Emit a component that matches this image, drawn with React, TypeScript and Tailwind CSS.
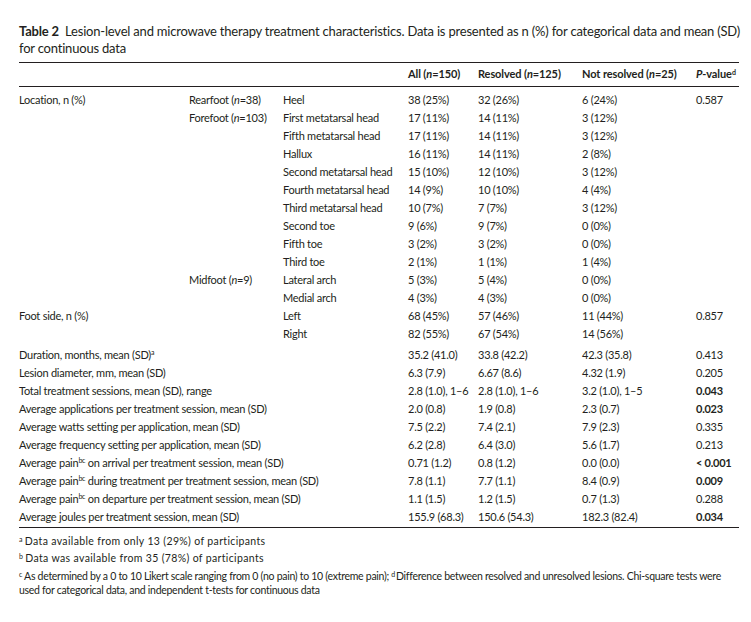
import React from 'react';

type Row = {
  a?: React.ReactNode;
  b?: React.ReactNode;
  c?: React.ReactNode;
  all: string;
  res: string;
  not: string;
  p?: string;
  bold?: boolean;
  gap?: boolean;
};

const N = () => <i>n</i>;

const rows: Row[] = [
  { a: 'Location, n (%)', b: <>Rearfoot (<N />=38)</>, c: 'Heel', all: '38 (25%)', res: '32 (26%)', not: '6 (24%)', p: '0.587' },
  { b: <>Forefoot (<N />=103)</>, c: 'First metatarsal head', all: '17 (11%)', res: '14 (11%)', not: '3 (12%)' },
  { c: 'Fifth metatarsal head', all: '17 (11%)', res: '14 (11%)', not: '3 (12%)' },
  { c: 'Hallux', all: '16 (11%)', res: '14 (11%)', not: '2 (8%)' },
  { c: 'Second metatarsal head', all: '15 (10%)', res: '12 (10%)', not: '3 (12%)' },
  { c: 'Fourth metatarsal head', all: '14 (9%)', res: '10 (10%)', not: '4 (4%)' },
  { c: 'Third metatarsal head', all: '10 (7%)', res: '7 (7%)', not: '3 (12%)' },
  { c: 'Second toe', all: '9 (6%)', res: '9 (7%)', not: '0 (0%)' },
  { c: 'Fifth toe', all: '3 (2%)', res: '3 (2%)', not: '0 (0%)' },
  { c: 'Third toe', all: '2 (1%)', res: '1 (1%)', not: '1 (4%)' },
  { b: <>Midfoot (<N />=9)</>, c: 'Lateral arch', all: '5 (3%)', res: '5 (4%)', not: '0 (0%)' },
  { c: 'Medial arch', all: '4 (3%)', res: '4 (3%)', not: '0 (0%)' },
  { a: 'Foot side, n (%)', c: 'Left', all: '68 (45%)', res: '57 (46%)', not: '11 (44%)', p: '0.857' },
  { c: 'Right', all: '82 (55%)', res: '67 (54%)', not: '14 (56%)' },
  { a: <>Duration, months, mean (SD)<sup className="text-[7px]">a</sup></>, all: '35.2 (41.0)', res: '33.8 (42.2)', not: '42.3 (35.8)', p: '0.413', gap: true },
  { a: 'Lesion diameter, mm, mean (SD)', all: '6.3 (7.9)', res: '6.67 (8.6)', not: '4.32 (1.9)', p: '0.205' },
  { a: 'Total treatment sessions, mean (SD), range', all: '2.8 (1.0), 1–6', res: '2.8 (1.0), 1–6', not: '3.2 (1.0), 1–5', p: '0.043', bold: true },
  { a: 'Average applications per treatment session, mean (SD)', all: '2.0 (0.8)', res: '1.9 (0.8)', not: '2.3 (0.7)', p: '0.023', bold: true },
  { a: 'Average watts setting per application, mean (SD)', all: '7.5 (2.2)', res: '7.4 (2.1)', not: '7.9 (2.3)', p: '0.335' },
  { a: 'Average frequency setting per application, mean (SD)', all: '6.2 (2.8)', res: '6.4 (3.0)', not: '5.6 (1.7)', p: '0.213' },
  { a: <>Average pain<sup className="text-[7px]">bc</sup> on arrival per treatment session, mean (SD)</>, all: '0.71 (1.2)', res: '0.8 (1.2)', not: '0.0 (0.0)', p: '< 0.001', bold: true },
  { a: <>Average pain<sup className="text-[7px]">bc</sup> during treatment per treatment session, mean (SD)</>, all: '7.8 (1.1)', res: '7.7 (1.1)', not: '8.4 (0.9)', p: '0.009', bold: true },
  { a: <>Average pain<sup className="text-[7px]">bc</sup> on departure per treatment session, mean (SD)</>, all: '1.1 (1.5)', res: '1.2 (1.5)', not: '0.7 (1.3)', p: '0.288' },
  { a: 'Average joules per treatment session, mean (SD)', all: '155.9 (68.3)', res: '150.6 (54.3)', not: '182.3 (82.4)', p: '0.034', bold: true },
];

const cols = 'grid grid-cols-[170px_94px_125px_70px_104px_114px_1fr]';

export default function App() {
  return (
    <div className="w-[751px] h-[622px] bg-white text-[#231f20] font-['Lato',sans-serif] px-[19px] pt-[23px]">
      <p className="text-[13px] leading-[17px] tracking-[-0.2px] w-[724px]">
        <b>Table 2</b>&nbsp; Lesion-level and microwave therapy treatment characteristics. Data is presented as n (%) for categorical data and mean (SD) for continuous data
      </p>

      <div className="mt-[5px] border-t border-[#231f20] w-[720px]">
        <div className={`${cols} text-[11px] font-bold tracking-[-0.1px] h-[24px] items-center border-b border-[#231f20]`}>
          <span />
          <span />
          <span />
          <span>All (<i>n</i>=150)</span>
          <span>Resolved (<i>n</i>=125)</span>
          <span>Not resolved (<i>n</i>=25)</span>
          <span className="whitespace-nowrap"><i>P</i>-value<sup className="text-[7px]">d</sup></span>
        </div>

        <div className="pt-[4px] pb-[1px] border-b border-[#231f20] text-[11px] tracking-[-0.25px]">
          {rows.map((r, i) => (
            <div key={i} className={`${cols} h-[18px] items-center whitespace-nowrap ${r.gap ? 'mt-[3px]' : ''}`}>
              <span className={r.c ? '' : 'col-span-3'}>{r.a}</span>
              {r.c && <span>{r.b}</span>}
              {r.c && <span>{r.c}</span>}
              <span>{r.all}</span>
              <span>{r.res}</span>
              <span>{r.not}</span>
              <span className={r.bold ? 'font-bold' : ''}>{r.p}</span>
            </div>
          ))}
        </div>
      </div>

      <div className="mt-[5px] text-[10.5px] leading-[17px] w-[722px]">
        <p className="tracking-[0.35px]"><sup className="text-[7px] mr-[2px]">a</sup>Data available from only 13 (29%) of participants</p>
        <p className="tracking-[0.35px]"><sup className="text-[7px] mr-[2px]">b</sup>Data was available from 35 (78%) of participants</p>
        <p className="leading-[14px] mt-[2px] tracking-[-0.28px]">
          <sup className="text-[7px] mr-[2px]">c</sup>As determined by a 0 to 10 Likert scale ranging from 0 (no pain) to 10 (extreme pain); <sup className="text-[7px] mr-[1px]">d</sup>Difference between resolved and unresolved lesions. Chi-square tests were used for categorical data, and independent t-tests for continuous data
        </p>
      </div>
    </div>
  );
}
